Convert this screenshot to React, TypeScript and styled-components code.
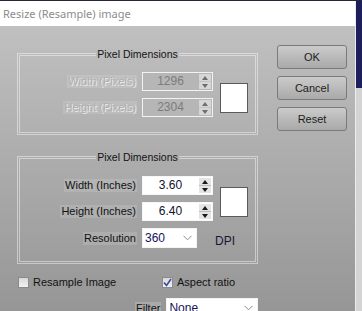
import styled, { createGlobalStyle } from "styled-components";

const GlobalStyle = createGlobalStyle`
  html, body {
    margin: 0;
    padding: 0;
  }
  body {
    width: 362px;
    height: 311px;
    overflow: hidden;
    background: #262838;
    font-family: "Liberation Sans", Arial, sans-serif;
  }
`;

const Screen = styled.div`
  display: flex;
  height: 311px;
  padding-top: 1px;
  box-sizing: border-box;
`;

const Dialog = styled.div`
  width: 355px;
  display: flex;
  flex-direction: column;
`;

const TitleBar = styled.div`
  height: 25px;
  flex-shrink: 0;
  display: flex;
  align-items: center;
  padding-left: 3px;
  background: #fff;
  font-family: "Noto Sans", "Open Sans", sans-serif;
  font-size: 11px;
  color: #8c8c8c;
`;

const Body = styled.div`
  flex: 1;
  display: flex;
  overflow: hidden;
  background: linear-gradient(#c0c0c0, #969696);
`;

const LeftColumn = styled.div`
  width: 241px;
  padding: 22px 0 0 17px;
  flex-shrink: 0;
`;

const ButtonColumn = styled.div`
  display: flex;
  flex-direction: column;
  gap: 7px;
  margin-left: 19px;
  padding-top: 19px;
`;

const Button = styled.button`
  width: 70px;
  height: 24px;
  padding: 0;
  border: 1px solid #7a7a7a;
  border-radius: 3px;
  background: linear-gradient(#cbcbcb, #a9a9a9);
  font-family: "Liberation Sans", Arial, sans-serif;
  font-size: 11px;
  color: #1c1c1c;
`;

const Group = styled.fieldset<{ $gapTop?: number; $padTop: number; $padBottom: number }>`
  margin: ${(p) => p.$gapTop ?? 0}px 0 0;
  width: 241px;
  box-sizing: border-box;
  padding: ${(p) => p.$padTop}px 0 ${(p) => p.$padBottom}px;
  border: 3px double rgba(255, 255, 255, 0.45);
  display: grid;
  grid-template-columns: 117px 71px 1fr;
  column-gap: 5px;
  row-gap: 7px;
  align-items: center;
`;

const Legend = styled.legend`
  margin: 0 auto;
  padding: 0 1px;
  font-size: 10.5px;
  line-height: 13px;
  color: #141414;
`;

const FieldLabel = styled.span<{ $disabled?: boolean }>`
  justify-self: end;
  padding: 0 1px;
  font-size: 11px;
  line-height: 13px;
  background: rgba(255, 255, 255, 0.13);
  color: ${(p) => (p.$disabled ? "#b0b0b0" : "#121212")};
  text-shadow: ${(p) => (p.$disabled ? "1px 1px 0 #ececec" : "none")};
`;

const SpinBox = styled.div<{ $disabled?: boolean }>`
  display: flex;
  height: 19px;
  box-sizing: border-box;
  border: 1px solid ${(p) => (p.$disabled ? "#f2f2f2" : "#f6f6f6")};
  background: ${(p) => (p.$disabled ? "#b6b6b6" : "#fff")};
`;

const SpinValue = styled.div<{ $disabled?: boolean }>`
  flex: 1;
  text-align: center;
  font-size: 12px;
  line-height: 17px;
  color: ${(p) => (p.$disabled ? "#7c7c7c" : "#101030")};
`;

const SpinButtons = styled.div<{ $disabled?: boolean }>`
  width: 12px;
  margin: 1px;
  display: flex;
  flex-direction: column;
  gap: 1px;
  background: ${(p) => (p.$disabled ? "#c4c4c4" : "#bcbcbc")};
`;

const SpinHalf = styled.div<{ $disabled?: boolean }>`
  flex: 1;
  display: flex;
  align-items: center;
  justify-content: center;
  background: ${(p) => (p.$disabled ? "#d6d6d6" : "#e4e4e4")};
`;

const Arrow = styled.div<{ $down?: boolean; $disabled?: boolean }>`
  width: 0;
  height: 0;
  border-left: 3.5px solid transparent;
  border-right: 3.5px solid transparent;
  ${(p) => (p.$down ? "border-top" : "border-bottom")}: 4px solid
    ${(p) => (p.$disabled ? "#6e6e6e" : "#1a1a1a")};
`;

const Swatch = styled.div`
  grid-column: 3;
  grid-row: 1 / span 2;
  align-self: start;
  margin: 11px 0 0 2px;
  width: 28px;
  height: 30px;
  box-sizing: border-box;
  border: 1px solid #5a5a5a;
  background: #fff;
`;

const SelectBox = styled.div<{ $width: number }>`
  width: ${(p) => p.$width}px;
  height: 20px;
  box-sizing: border-box;
  display: flex;
  align-items: center;
  justify-content: space-between;
  padding: 0 4px 0 2px;
  border: 1px solid #f4f4f4;
  background: #fff;
  font-size: 12px;
  color: #14145a;
`;

const ResolutionCell = styled.div`
  grid-column: 2 / span 2;
  display: flex;
  align-items: center;
`;

const Unit = styled.span`
  margin-left: 18px;
  padding-top: 6px;
  font-size: 12px;
  color: #151838;
`;

const CheckRow = styled.div`
  display: flex;
  margin-top: 11px;
  padding-left: 1px;
`;

const CheckItem = styled.label<{ $width?: number }>`
  display: flex;
  align-items: center;
  gap: 4px;
  width: ${(p) => (p.$width ? `${p.$width}px` : "auto")};
  font-size: 11px;
  line-height: 14px;
  color: #121212;
`;

const Box = styled.span`
  width: 11px;
  height: 11px;
  box-sizing: border-box;
  display: flex;
  align-items: center;
  justify-content: center;
  border: 1px solid #8a8a8a;
  background: linear-gradient(#d8d8d8, #f2f2f2);
`;

const FilterRow = styled.div`
  display: flex;
  align-items: center;
  gap: 5px;
  margin-top: 9px;
  padding-left: 118px;
`;

const FilterLabel = styled.span`
  padding: 0 1px;
  font-size: 11px;
  line-height: 13px;
  background: rgba(255, 255, 255, 0.18);
  color: #121212;
`;

const SideStrip = styled.div`
  width: 7px;
  border-left: 1px solid #ececec;
  box-sizing: border-box;
  background: linear-gradient(#1c1f5c 0 87px, #d4d4d4 87px);
`;

function Chevron() {
  return (
    <svg width="9" height="6" viewBox="0 0 9 6">
      <polyline points="0.5,0.8 4.5,4.8 8.5,0.8" fill="none" stroke="#8a8a8a" strokeWidth="1" />
    </svg>
  );
}

function Tick() {
  return (
    <svg width="9" height="9" viewBox="0 0 9 9">
      <polyline points="1,4.5 3.5,7.5 8,1" fill="none" stroke="#3a4aa0" strokeWidth="1.6" />
    </svg>
  );
}

function Spin({ value, disabled }: { value: string; disabled?: boolean }) {
  return (
    <SpinBox $disabled={disabled}>
      <SpinValue $disabled={disabled}>{value}</SpinValue>
      <SpinButtons $disabled={disabled}>
        <SpinHalf $disabled={disabled}>
          <Arrow $disabled={disabled} />
        </SpinHalf>
        <SpinHalf $disabled={disabled}>
          <Arrow $down $disabled={disabled} />
        </SpinHalf>
      </SpinButtons>
    </SpinBox>
  );
}

export default function App() {
  return (
    <>
      <GlobalStyle />
      <Screen>
        <Dialog>
          <TitleBar>Resize (Resample) image</TitleBar>
          <Body>
            <LeftColumn>
              <Group $padTop={11} $padBottom={15}>
                <Legend>Pixel Dimensions</Legend>
                <FieldLabel $disabled>Width (Pixels)</FieldLabel>
                <Spin value="1296" disabled />
                <Swatch />
                <FieldLabel $disabled>Height (Pixels)</FieldLabel>
                <Spin value="2304" disabled />
              </Group>

              <Group $gapTop={16} $padTop={12} $padBottom={13}>
                <Legend>Pixel Dimensions</Legend>
                <FieldLabel>Width (Inches)</FieldLabel>
                <Spin value="3.60" />
                <Swatch />
                <FieldLabel>Height (Inches)</FieldLabel>
                <Spin value="6.40" />
                <FieldLabel>Resolution</FieldLabel>
                <ResolutionCell>
                  <SelectBox $width={55}>
                    360
                    <Chevron />
                  </SelectBox>
                  <Unit>DPI</Unit>
                </ResolutionCell>
              </Group>

              <CheckRow>
                <CheckItem $width={144}>
                  <Box />
                  Resample Image
                </CheckItem>
                <CheckItem>
                  <Box>
                    <Tick />
                  </Box>
                  Aspect ratio
                </CheckItem>
              </CheckRow>

              <FilterRow>
                <FilterLabel>Filter</FilterLabel>
                <SelectBox $width={100}>
                  None
                  <Chevron />
                </SelectBox>
              </FilterRow>
            </LeftColumn>

            <ButtonColumn>
              <Button>OK</Button>
              <Button>Cancel</Button>
              <Button>Reset</Button>
            </ButtonColumn>
          </Body>
        </Dialog>
        <SideStrip />
      </Screen>
    </>
  );
}
